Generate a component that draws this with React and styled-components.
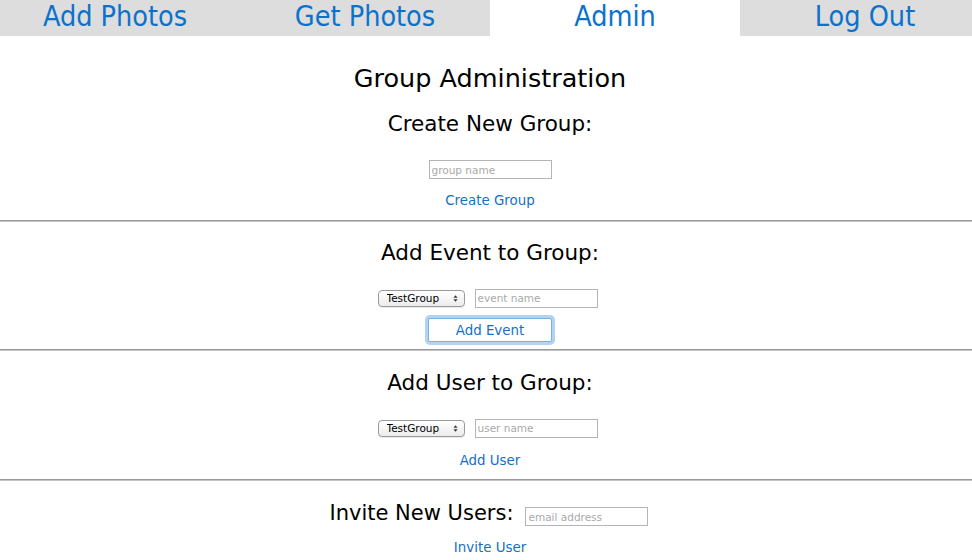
import React from 'react';
import styled, { createGlobalStyle } from 'styled-components';

const GlobalStyle = createGlobalStyle`
   html, body {
      margin: 0;
      padding: 0;
      background: #fff;
   }
   body {
      font-family: "DejaVu Sans", "Liberation Sans", sans-serif;
      color: #000;
   }
`;

const tabs = [
   { label: 'Add Photos' },
   { label: 'Get Photos' },
   { label: 'Admin', active: true },
   { label: 'Log Out' },
];

export default function App() {
   return (
      <>
         <GlobalStyle />
         <NavBar>
            <NavTrack>
               {tabs.map((tab) => (
                  <Tab key={tab.label} $active={tab.active}>
                     {tab.label}
                  </Tab>
               ))}
            </NavTrack>
         </NavBar>

         <Page>
            <Section>
               <PageTitle>Group Administration</PageTitle>
               <Heading>Create New Group:</Heading>
               <Field placeholder="group name" $top={23} />
               <LinkButton $top={14}>Create Group</LinkButton>
            </Section>

            <Divider />

            <Section>
               <Heading>Add Event to Group:</Heading>
               <Row $top={23}>
                  <GroupSelect />
                  <Field placeholder="event name" />
               </Row>
               <FocusButton>Add Event</FocusButton>
            </Section>

            <Divider $top={7} />

            <Section>
               <Heading $top={19}>Add User to Group:</Heading>
               <Row $top={23}>
                  <GroupSelect />
                  <Field placeholder="user name" />
               </Row>
               <LinkButton $top={16}>Add User</LinkButton>
            </Section>

            <Divider $top={10} />

            <Section>
               <InviteRow>
                  <InviteHeading>Invite New Users:</InviteHeading>
                  <Field placeholder="email address" />
               </InviteRow>
               <LinkButton $top={14}>Invite User</LinkButton>
            </Section>
         </Page>
      </>
   );
}

function GroupSelect() {
   return (
      <SelectWrap>
         <Select defaultValue="TestGroup">
            <option>TestGroup</option>
         </Select>
         <Arrows viewBox="0 0 6 10" aria-hidden="true">
            <path d="M0.5 4 L3 1 L5.5 4 Z" fill="#333" />
            <path d="M0.5 6 L3 9 L5.5 6 Z" fill="#333" />
         </Arrows>
      </SelectWrap>
   );
}

const NavBar = styled.nav`
   height: 36px;
   overflow: hidden;
   background: #dddddd;
`;

const NavTrack = styled.div`
   display: flex;
   margin-left: -10px;
`;

const Tab = styled.a`
   flex: 0 0 250px;
   height: 36px;
   box-sizing: border-box;
   padding-bottom: 3px;
   text-align: center;
   font-family: "DejaVu Sans Condensed", "DejaVu Sans", sans-serif;
   font-stretch: condensed;
   font-size: 28.5px;
   line-height: 33px;
   color: #0b72cc;
   background: ${(p) => (p.$active ? '#fff' : '#dddddd')};
   cursor: pointer;
`;

const Page = styled.main`
   display: flex;
   flex-direction: column;
`;

const Section = styled.section`
   display: flex;
   flex-direction: column;
   align-items: center;
   padding-left: 8px;
`;

const PageTitle = styled.h1`
   margin: 27px 0 0;
   font-size: 25.5px;
   line-height: 30px;
   font-weight: normal;
`;

const Heading = styled.h2`
   margin: ${(p) => (p.$top ?? 18)}px 0 0;
   font-size: 21.5px;
   line-height: 26px;
   font-weight: normal;
`;

const InviteHeading = styled(Heading)`
   margin: 0;
   font-size: 21px;
`;

const Row = styled.div`
   display: flex;
   align-items: center;
   gap: 10px;
   height: 18px;
   margin-top: ${(p) => p.$top}px;
   margin-left: -5px;
`;

const InviteRow = styled.div`
   display: flex;
   align-items: flex-end;
   gap: 12px;
   margin-top: 19px;
   margin-left: -2px;
`;

const Field = styled.input`
   box-sizing: border-box;
   width: 123px;
   height: 19px;
   margin: ${(p) => (p.$top ? `${p.$top}px 0 0` : '0')};
   padding: 0 2px;
   border: 1px solid #b4b4b4;
   border-radius: 0;
   font-family: "DejaVu Sans", sans-serif;
   font-size: 10.5px;
   color: #000;
   outline: none;

   &::placeholder {
      color: #a9a9a9;
   }
`;

const SelectWrap = styled.div`
   position: relative;
   width: 87px;
   height: 17px;
`;

const Select = styled.select`
   display: block;
   appearance: none;
   box-sizing: border-box;
   width: 100%;
   height: 100%;
   margin: 0;
   padding: 0 0 1px 8px;
   border: 1px solid #9a9a9a;
   border-radius: 4px;
   background: linear-gradient(#ffffff, #ececec);
   font-family: "DejaVu Sans", sans-serif;
   font-size: 10.5px;
   line-height: 14px;
   color: #000;
   box-shadow: 0 1px 0 rgba(0, 0, 0, 0.08);
`;

const Arrows = styled.svg`
   position: absolute;
   right: 7px;
   top: 4px;
   width: 5px;
   height: 9px;
   pointer-events: none;
`;

const LinkButton = styled.a`
   margin-top: ${(p) => p.$top}px;
   font-size: 13.4px;
   line-height: 16px;
   color: #1470c4;
   cursor: pointer;
`;

const FocusButton = styled.button`
   box-sizing: border-box;
   width: 124px;
   height: 24px;
   margin-top: 11px;
   padding: 0;
   border: 1px solid #7cb0e2;
   border-radius: 2px;
   background: #fff;
   box-shadow: 0 0 0 3px #b2d3f2;
   font-family: "DejaVu Sans", sans-serif;
   font-size: 13.4px;
   color: #1470c4;
   cursor: pointer;
`;

const Divider = styled.hr`
   width: 100%;
   height: 0;
   margin: ${(p) => (p.$top ?? 11)}px 0 0;
   border: none;
   border-top: 1px solid #999;
   border-bottom: 1px solid #c4c4c4;
`;
